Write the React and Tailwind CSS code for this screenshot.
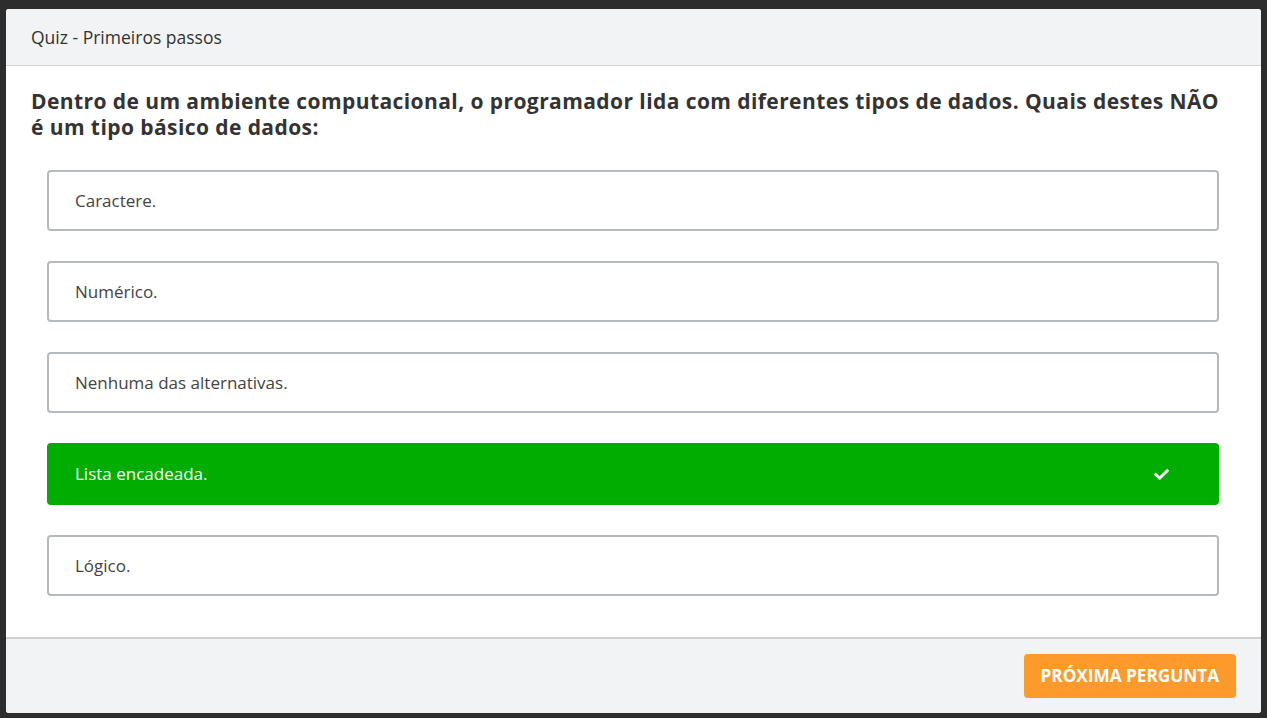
import React from "react";
import { FaCheck } from "react-icons/fa";

const options = [
  { text: "Caractere.", correct: false },
  { text: "Numérico.", correct: false },
  { text: "Nenhuma das alternativas.", correct: false },
  { text: "Lista encadeada.", correct: true },
  { text: "Lógico.", correct: false },
];

export default function App() {
  return (
    <div
      className="w-[1267px] h-[718px] bg-[#2d2d2d] pt-[9px] pl-[6px] pr-[6px] pb-[5px]"
      style={{ fontFamily: '"Open Sans", "Noto Sans", sans-serif' }}
    >
      <div className="h-full bg-white rounded-[3px] flex flex-col overflow-hidden">
        <div className="h-[57px] shrink-0 bg-[#f2f3f4] border-b border-[#d0d0d0] flex items-center pl-[25px] text-[17.5px] text-[#333]">
          Quiz - Primeiros passos
        </div>
        <div className="flex-1 pt-[22px] pl-[25px] pr-[36px]">
          <h2 className="text-[21px] leading-[26px] font-bold text-[#333] tracking-[0.42px]">
            Dentro de um ambiente computacional, o programador lida com diferentes tipos de dados. Quais destes NÃO é um tipo básico de dados:
          </h2>
          <div className="mt-[30px] ml-[16px] mr-[6px] flex flex-col gap-[30px]">
            {options.map((o) =>
              o.correct ? (
                <div
                  key={o.text}
                  className="h-[62px] rounded-[4px] bg-[#00ad00] flex items-center justify-between pl-[28px] pr-[50px] text-white text-[17px]"
                >
                  <span>{o.text}</span>
                  <FaCheck className="w-[15px] h-[15px]" />
                </div>
              ) : (
                <div
                  key={o.text}
                  className="h-[61px] rounded-[4px] border-2 border-[#b4babe] flex items-center pl-[26px] text-[#444] text-[17px]"
                >
                  {o.text}
                </div>
              )
            )}
          </div>
        </div>
        <div className="h-[76px] shrink-0 bg-[#f2f3f4] border-t-2 border-[#cfcfcf] flex items-center justify-end pr-[25px]">
          <button className="h-[44px] px-[17px] rounded-[4px] bg-[#fd9a2c] text-white font-bold text-[17.2px] uppercase">
            Próxima pergunta
          </button>
        </div>
      </div>
    </div>
  );
}
